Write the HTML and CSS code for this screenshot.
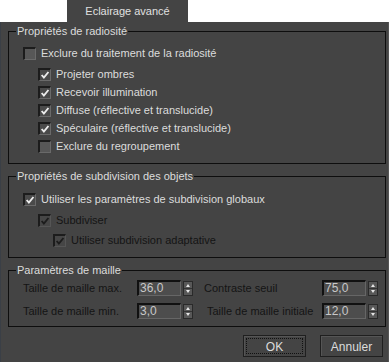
FILE: index.html
```html
<!DOCTYPE html>
<html lang="fr">
<head>
    <meta charset="UTF-8">
    <title>Eclairage avancé</title>
    <link rel="stylesheet" href="styles.css">
</head>
<body>

    <div class="tabs">
        <div class="tab">Eclairage avancé</div>
    </div>

    <div class="panel">

        <!-- Radiosité -->
        <fieldset class="group group-radio">
            <legend>Propriétés de radiosité</legend>
            <div class="row">
                <span class="box"></span>
                <span class="label">Exclure du traitement de la radiosité</span>
            </div>
            <div class="sub">
                <div class="row">
                    <span class="box checked"><svg viewBox="0 0 9 9"><polyline points="1.5,4.5 3.5,6.8 7.6,1.8"/></svg></span>
                    <span class="label">Projeter ombres</span>
                </div>
                <div class="row">
                    <span class="box checked"><svg viewBox="0 0 9 9"><polyline points="1.5,4.5 3.5,6.8 7.6,1.8"/></svg></span>
                    <span class="label">Recevoir illumination</span>
                </div>
                <div class="row">
                    <span class="box checked"><svg viewBox="0 0 9 9"><polyline points="1.5,4.5 3.5,6.8 7.6,1.8"/></svg></span>
                    <span class="label">Diffuse (réflective et translucide)</span>
                </div>
                <div class="row">
                    <span class="box checked"><svg viewBox="0 0 9 9"><polyline points="1.5,4.5 3.5,6.8 7.6,1.8"/></svg></span>
                    <span class="label">Spéculaire (réflective et translucide)</span>
                </div>
                <div class="row">
                    <span class="box"></span>
                    <span class="label">Exclure du regroupement</span>
                </div>
            </div>
        </fieldset>

        <!-- Subdivision -->
        <fieldset class="group group-subdiv">
            <legend>Propriétés de subdivision des objets</legend>
            <div class="row">
                <span class="box checked"><svg viewBox="0 0 9 9"><polyline points="1.5,4.5 3.5,6.8 7.6,1.8"/></svg></span>
                <span class="label">Utiliser les paramètres de subdivision globaux</span>
            </div>
            <div class="sub">
                <div class="row row-gap2 disabled">
                    <span class="box checked"><svg viewBox="0 0 9 9"><polyline points="1.5,4.5 3.5,6.8 7.6,1.8"/></svg></span>
                    <span class="label">Subdiviser</span>
                </div>
                <div class="sub">
                    <div class="row row-gap3 disabled">
                        <span class="box checked"><svg viewBox="0 0 9 9"><polyline points="1.5,4.5 3.5,6.8 7.6,1.8"/></svg></span>
                        <span class="label">Utiliser subdivision adaptative</span>
                    </div>
                </div>
            </div>
        </fieldset>

        <!-- Maille -->
        <fieldset class="group group-mesh">
            <legend>Paramètres de maille</legend>
            <div class="mesh-row">
                <span class="mesh-label">Taille de maille max.</span>
                <span class="field">36,0</span>
                <span class="spin"><i class="up"></i><i class="down"></i></span>
                <span class="mesh-label col2">Contraste seuil</span>
                <span class="field">75,0</span>
                <span class="spin"><i class="up"></i><i class="down"></i></span>
            </div>
            <div class="mesh-row">
                <span class="mesh-label">Taille de maille min.</span>
                <span class="field">3,0</span>
                <span class="spin"><i class="up"></i><i class="down"></i></span>
                <span class="mesh-label col2 col2-shift">Taille de maille initiale</span>
                <span class="field">12,0</span>
                <span class="spin"><i class="up"></i><i class="down"></i></span>
            </div>
        </fieldset>

        <div class="buttons">
            <button class="btn focus"><span>OK</span></button>
            <button class="btn"><span>Annuler</span></button>
        </div>

    </div>

</body>
</html>
```

FILE: styles.css
```css
body {
    margin: 0;
    width: 389px;
    height: 362px;
    overflow: hidden;
    background: #fff;
    font-family: "Liberation Sans", Arial, sans-serif;
    font-size: 11px;
    color: #dcdcdc;
}
.tabs {
    height: 22px;
    background: #fff;
    display: flex;
}
.tab {
    margin-left: 67px;
    width: 121px;
    height: 22px;
    background: #444;
    text-align: center;
    line-height: 22px;
    color: #e0e0e0;
}
.panel {
    height: 340px;
    background: #444;
    border-left: 1px solid #3a3f46;
    border-right: 1px solid #555;
    box-sizing: border-box;
    padding-top: 2px;
}
.group {
    margin: 0 2px 0 7px;
    padding: 0 0 0 14px;
    border: 1px solid #0e0e0e;
    min-width: 0;
}
.group legend {
    margin-left: -7px;
    padding: 0 1px;
    line-height: 14px;
    color: #dcdcdc;
}
.group-radio {
    padding-top: 6px;
    padding-bottom: 8px;
}
.group-subdiv {
    margin-top: 5px;
    padding-top: 7px;
    padding-bottom: 8px;
}
.group-mesh {
    margin-top: 5px;
    padding-top: 3px;
    padding-bottom: 7px;
}
.row {
    height: 18px;
    display: flex;
    align-items: center;
}
.sub {
    padding-left: 15px;
}
.group-radio .sub {
    padding-top: 3px;
}
.row-gap2 {
    margin-top: 3px;
}
.row-gap3 {
    margin-top: 2px;
}
.box {
    width: 13px;
    height: 13px;
    box-sizing: border-box;
    background: #575757;
    border-top: 2px solid #1c1c1c;
    border-left: 2px solid #1c1c1c;
    border-right: 1px solid #6a6a6a;
    border-bottom: 1px solid #6a6a6a;
    margin-right: 5px;
    flex: none;
}
.box.checked {
    background: #4a4a4a;
}
.box svg {
    display: block;
    width: 10px;
    height: 10px;
}
.box svg polyline {
    fill: none;
    stroke: #ececec;
    stroke-width: 1.7;
}
.label {
    white-space: nowrap;
}
.disabled .label {
    color: #141414;
}
.disabled .box {
    background: #464646;
    border-right-color: #555;
    border-bottom-color: #555;
}
.disabled .box svg polyline {
    stroke: #1c1c1c;
}
.mesh-row {
    height: 16px;
    display: flex;
    align-items: center;
}
.mesh-row + .mesh-row {
    margin-top: 7px;
}
.mesh-label {
    width: 114px;
    color: #141414;
    white-space: nowrap;
}
.col2 {
    margin-left: 11px;
    width: 118px;
}
.col2-shift {
    margin-left: 14px;
    width: 115px;
}
.field {
    width: 44px;
    height: 16px;
    box-sizing: border-box;
    background: #4d4d4d;
    border-top: 2px solid #111;
    border-left: 2px solid #111;
    border-right: 1px solid #666;
    border-bottom: 1px solid #666;
    color: #c8c8c8;
    font-size: 12px;
    line-height: 12px;
    padding-left: 1px;
}
.spin {
    margin-left: 2px;
    width: 10px;
    height: 15px;
    box-sizing: border-box;
    background: #585858;
    border: 1px solid #2a2a2a;
    display: flex;
    flex-direction: column;
}
.spin i {
    flex: 1;
    position: relative;
}
.spin .up {
    border-bottom: 1px solid #333;
}
.spin i::after {
    content: "";
    position: absolute;
    left: 2px;
    top: 2px;
    border-left: 2px solid transparent;
    border-right: 2px solid transparent;
}
.spin .up::after {
    border-bottom: 3px solid #e6e6e6;
}
.spin .down::after {
    top: 1px;
    border-top: 3px solid #e6e6e6;
}
.buttons {
    display: flex;
    justify-content: flex-end;
    gap: 14px;
    margin-top: 8px;
    padding-right: 5px;
}
.btn {
    width: 63px;
    height: 22px;
    padding: 2px;
    background: #444;
    border: 1px solid #1f1f1f;
    box-shadow: inset 1px 1px 0 #555;
    color: #dcdcdc;
    font-family: "Liberation Sans", Arial, sans-serif;
    font-size: 12px;
}
.btn span {
    display: block;
    height: 100%;
    line-height: 16px;
    border: 1px dotted transparent;
    box-sizing: border-box;
}
.btn.focus span {
    border-color: #111;
}
```
